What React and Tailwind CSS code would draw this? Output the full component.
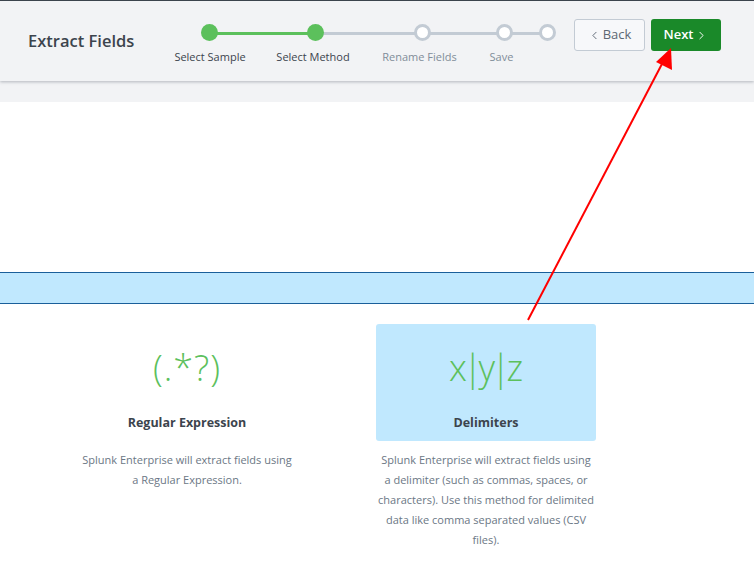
import React from 'react';
import { ChevronLeft, ChevronRight } from 'lucide-react';

const steps = [
  { label: 'Select Sample', done: true },
  { label: 'Select Method', done: true },
  { label: 'Rename Fields', done: false },
  { label: 'Save', done: false },
];

const Dot = ({ done }) => (
  <div
    className={`w-[17px] h-[17px] rounded-full shrink-0 ${
      done ? 'bg-[#5cc05c]' : 'bg-white border-[3px] border-[#c3cbd4]'
    }`}
  />
);

const Stepper = () => (
  <div className="relative w-[400px] h-[60px] mt-[23px]">
    {/* track */}
    <div className="absolute left-[38px] top-[8px] w-[106px] h-[3px] bg-[#5cc05c]" />
    <div className="absolute left-[144px] top-[8px] w-[232px] h-[3px] bg-[#c3cbd4]" />
    <div className="absolute left-[29px] top-0 flex">
      <div className="w-[106px]"><Dot done /></div>
      <div className="w-[107px]"><Dot done /></div>
      <div className="w-[82px]"><Dot /></div>
      <div className="w-[43px]"><Dot /></div>
      <Dot />
    </div>
    <div className="absolute left-[-12px] top-[27px] flex text-[11px] leading-none">
      {steps.map((s, i) => (
        <div
          key={s.label}
          className={`text-center whitespace-nowrap ${i === 0 ? 'w-[100px]' : i === 1 ? 'w-[106px]' : i === 2 ? 'w-[107px]' : 'w-[57px]'} ${
            s.done ? 'text-[#3c444d]' : 'text-[#818d99]'
          }`}
        >
          {s.label}
        </div>
      ))}
    </div>
  </div>
);

const Card = ({ icon, title, desc, active, tight }) => (
  <div className="w-[220px] flex flex-col items-center">
    <div
      className={`w-[220px] h-[117px] rounded-[3px] flex flex-col items-center ${
        active ? 'bg-[#c0e8fe]' : ''
      }`}
    >
      <div
        className={`mt-[18px] h-[52px] text-[#5cc05c] text-[36px] font-light leading-[52px] ${
          tight ? 'tracking-[-4px] -ml-[4px]' : 'tracking-[1px]'
        }`}
      >
        {icon}
      </div>
      <div className="mt-[20px] text-[12.5px] font-bold text-[#3c444d]">{title}</div>
    </div>
    <p className="mt-[9px] w-[216px] text-[11px] leading-[20px] text-[#6b7785] text-center">{desc}</p>
  </div>
);

export default function App() {
  return (
    <div
      className="relative w-[754px] h-[565px] bg-white overflow-hidden"
      style={{ fontFamily: '"Open Sans", Lato, sans-serif' }}
    >
      <div className="h-px bg-[#3c444d]" />
      <header className="relative z-10 h-[80px] bg-[#f2f3f5] flex items-start shadow-[0_1px_3px_rgba(60,70,85,0.35)]">
        <h1 className="ml-[28px] mt-[28px] text-[16.5px] font-semibold text-[#3c444d]">Extract Fields</h1>
        <div className="absolute left-[172px] top-0">
          <Stepper />
        </div>
        <div className="ml-auto mr-[33px] mt-[18px] flex gap-[6px]">
          <button className="h-[32px] w-[71px] rounded-[3px] border border-[#c3cbd4] bg-[#f7f8fa] text-[13px] text-[#5c6773] flex items-center justify-center gap-[2px]">
            <ChevronLeft size={13} strokeWidth={1.75} />Back
          </button>
          <button className="h-[32px] w-[70px] rounded-[3px] bg-[#1a8929] text-[13px] font-semibold text-white flex items-center justify-center gap-[2px]">
            Next<ChevronRight size={13} strokeWidth={1.75} />
          </button>
        </div>
      </header>
      <div className="h-[21px] bg-[#f2f3f5]" />
      <div className="h-[170px]" />
      <div className="h-[32px] bg-[#c0e8fe] border-y border-[#1a5f9a]" />
      <div className="mt-[20px] flex pl-[77px] gap-[79px]">
        <Card
          icon="(.*?)"
          title="Regular Expression"
          desc={<>Splunk Enterprise will extract fields using<br />a Regular Expression.</>}
        />
        <Card
          active
          tight
          icon="x|y|z"
          title="Delimiters"
          desc="Splunk Enterprise will extract fields using a delimiter (such as commas, spaces, or characters). Use this method for delimited data like comma separated values (CSV files)."
        />
      </div>
      {/* annotation arrow */}
      <svg className="absolute inset-0 pointer-events-none z-20" width="754" height="565">
        <line x1="528" y1="320" x2="663" y2="62" stroke="#ff0000" strokeWidth="2" />
        <polygon points="671,48 672,70 656,62" fill="#ff0000" />
      </svg>
    </div>
  );
}
